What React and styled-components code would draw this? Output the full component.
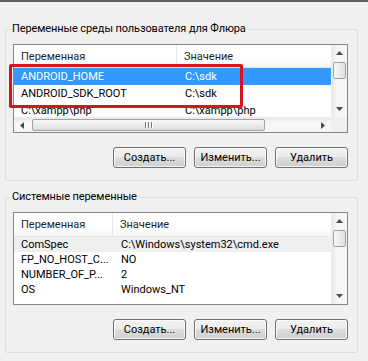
import React from 'react'
import styled, { createGlobalStyle } from 'styled-components'

const GlobalStyle = createGlobalStyle`
    body {
        margin: 0;
        background: #f0f0f0;
        font-family: Roboto, "Open Sans", sans-serif;
        font-size: 11px;
        color: #000;
    }
`

const userVars = [
    { name: 'ANDROID_HOME', value: 'C:\\sdk', selected: true },
    { name: 'ANDROID_SDK_ROOT', value: 'C:\\sdk' },
    { name: 'C:\\xampp\\php', value: 'C:\\xampp\\php' },
]

const systemVars = [
    { name: 'ComSpec', value: 'C:\\Windows\\system32\\cmd.exe', soft: true },
    { name: 'FP_NO_HOST_C...', value: 'NO' },
    { name: 'NUMBER_OF_P...', value: '2' },
    { name: 'OS', value: 'Windows_NT' },
]

const Arrow = ({ dir }) => {
    // small black triangles of the scrollbar buttons
    const pts = {
        up: '0,4 3.5,0 7,4',
        down: '0,0 7,0 3.5,4',
        left: '4,0 4,7 0,3.5',
        right: '0,0 4,3.5 0,7',
    }[dir]
    const vertical = dir === 'up' || dir === 'down'
    return (
        <svg width={vertical ? 7 : 4} height={vertical ? 4 : 7} viewBox={vertical ? '0 0 7 4' : '0 0 4 7'}>
            <polygon points={pts} fill="#4a4a4a" />
        </svg>
    )
}

const VerticalScroll = () => (
    <VScroll>
        <ScrollButton $v><Arrow dir="up" /></ScrollButton>
        <VThumb />
        <Track />
        <ScrollButton $v><Arrow dir="down" /></ScrollButton>
    </VScroll>
)

const HorizontalScroll = () => (
    <HScroll>
        <ScrollButton><Arrow dir="left" /></ScrollButton>
        <HThumb><Grip><i /><i /><i /></Grip></HThumb>
        <Track />
        <ScrollButton><Arrow dir="right" /></ScrollButton>
    </HScroll>
)

const VarList = ({ rows, height, rowHeight, headerHeight, colWidth, hscroll, children }) => (
    <ListView $height={height} $hscroll={hscroll}>
        <Viewport>
            <Header $h={headerHeight}>
                <HeadCell $w={colWidth}>Переменная</HeadCell>
                <HeadCell $last>Значение</HeadCell>
            </Header>
            {rows.map((r) => (
                <Row key={r.name} $h={rowHeight} $selected={r.selected} $soft={r.soft}>
                    <Cell $w={colWidth}>{r.name}</Cell>
                    <Cell $last>{r.value}</Cell>
                </Row>
            ))}
        </Viewport>
        <VerticalScroll />
        {hscroll && <HorizontalScroll />}
        {hscroll && <Corner />}
        {children}
    </ListView>
)

const Buttons = () => (
    <ButtonRow>
        <Button>Создать...</Button>
        <Button>Изменить...</Button>
        <Button>Удалить</Button>
    </ButtonRow>
)

const App = () => {
    return (
        <Window>
            <GlobalStyle />
            <GroupBox>
                <Legend>Переменные среды пользователя для Флюра</Legend>
                <VarList rows={userVars} height={89} rowHeight={17} headerHeight={23} colWidth={163} hscroll>
                    <Marker />
                </VarList>
                <Buttons />
            </GroupBox>
            <GroupBox $gap>
                <Legend>Системные переменные</Legend>
                <VarList rows={systemVars} height={93} rowHeight={15} headerHeight={24} colWidth={99} />
                <Buttons />
            </GroupBox>
        </Window>
    )
}

export default App

const Window = styled.div`
    width: 368px;
    height: 361px;
    box-sizing: border-box;
    border-top: 2px solid #5e5e5e;
    padding: 19px 0 0 5px;
    overflow: hidden;
`
const GroupBox = styled.fieldset`
    width: 353px;
    box-sizing: border-box;
    margin: ${p => (p.$gap ? '8px' : '0')} 0 0 0;
    padding: 7px 9px 12px 7px;
    border: 1px solid #d5dfe5;
    border-radius: 3px;
    min-width: 0;
`
const Legend = styled.legend`
    margin-left: -3px;
    padding: 0 2px;
    line-height: 16px;
    font-size: 11px;
    letter-spacing: -0.1px;
    color: #000;
`
const ListView = styled.div`
    position: relative;
    width: 335px;
    height: ${p => p.$height}px;
    box-sizing: border-box;
    border: 1px solid #828790;
    background: #fff;
    display: grid;
    grid-template-columns: 1fr 16px;
    grid-template-rows: ${p => (p.$hscroll ? '1fr 15px' : '1fr')};
`
const Viewport = styled.div`
    overflow: hidden;
    min-height: 0;
    min-width: 0;
`
const Header = styled.div`
    display: flex;
    height: ${p => p.$h}px;
    background: linear-gradient(#ffffff 0%, #ffffff 55%, #f6f7f8 100%);
    border-bottom: 1px solid #e3e6ea;
    box-sizing: border-box;
`
const HeadCell = styled.div`
    display: flex;
    align-items: center;
    padding-left: 7px;
    width: ${p => (p.$last ? 'auto' : `${p.$w}px`)};
    flex: ${p => (p.$last ? '1' : 'none')};
    border-right: ${p => (p.$last ? 'none' : '1px solid #e3e6ea')};
    box-sizing: border-box;
    color: #1e1e1e;
    white-space: nowrap;
`
const Row = styled.div`
    display: flex;
    height: ${p => p.$h}px;
    align-items: center;
    background: ${p => (p.$selected ? '#3399ff' : p.$soft ? '#efefef' : 'transparent')};
    color: ${p => (p.$selected ? '#fff' : '#000')};
    white-space: nowrap;
`
const Cell = styled.div`
    padding-left: 7px;
    width: ${p => (p.$last ? 'auto' : `${p.$w + 1}px`)};
    flex: ${p => (p.$last ? '1' : 'none')};
    box-sizing: border-box;
    overflow: hidden;
`
const VScroll = styled.div`
    grid-column: 2;
    grid-row: 1;
    display: flex;
    flex-direction: column;
    background: linear-gradient(to right, #e8e8e8, #f6f6f6 30%, #f6f6f6);
    border-left: 1px solid #ececec;
`
const HScroll = styled.div`
    grid-column: 1;
    grid-row: 2;
    display: flex;
    background: linear-gradient(#e8e8e8, #f6f6f6 30%, #f6f6f6);
    border-top: 1px solid #ececec;
`
const ScrollButton = styled.div`
    flex: none;
    width: ${p => (p.$v ? 'auto' : '16px')};
    height: ${p => (p.$v ? '16px' : 'auto')};
    display: flex;
    align-items: center;
    justify-content: center;
`
const Track = styled.div`
    flex: 1;
`
const VThumb = styled.div`
    flex: none;
    height: 15px;
    margin: 1px 1px 0 1px;
    border: 1px solid #a3a3a3;
    border-radius: 2px;
    background: linear-gradient(to right, #f7f7f7, #ececec 50%, #dcdcdc);
`
const HThumb = styled.div`
    flex: none;
    width: 231px;
    margin: 1px 0 1px 2px;
    border: 1px solid #a3a3a3;
    border-radius: 2px;
    background: linear-gradient(#f7f7f7, #ececec 50%, #dadada);
    display: flex;
    align-items: center;
    justify-content: center;
`
const Grip = styled.div`
    display: flex;
    gap: 2px;
    i {
        width: 1px;
        height: 6px;
        background: #7a7a7a;
        box-shadow: 1px 0 0 #fff;
    }
`
const Corner = styled.div`
    grid-column: 2;
    grid-row: 2;
    background: #f0f0f0;
`
const Marker = styled.div`
    position: absolute;
    left: -5px;
    top: 19px;
    width: 234px;
    height: 44px;
    border: 3px solid #d3151d;
    border-radius: 2px;
    box-sizing: border-box;
    pointer-events: none;
`
const ButtonRow = styled.div`
    display: flex;
    justify-content: flex-end;
    gap: 8px;
    margin-top: 14px;
`
const Button = styled.button`
    width: 73px;
    height: 21px;
    padding: 0;
    border: 1px solid #707070;
    border-radius: 3px;
    background: linear-gradient(#f2f2f2 0%, #ebebeb 49%, #dddddd 50%, #cfcfcf 100%);
    box-shadow: inset 0 0 0 1px rgba(255, 255, 255, 0.8);
    font-family: Roboto, "Open Sans", sans-serif;
    font-size: 11px;
    color: #000;
`
